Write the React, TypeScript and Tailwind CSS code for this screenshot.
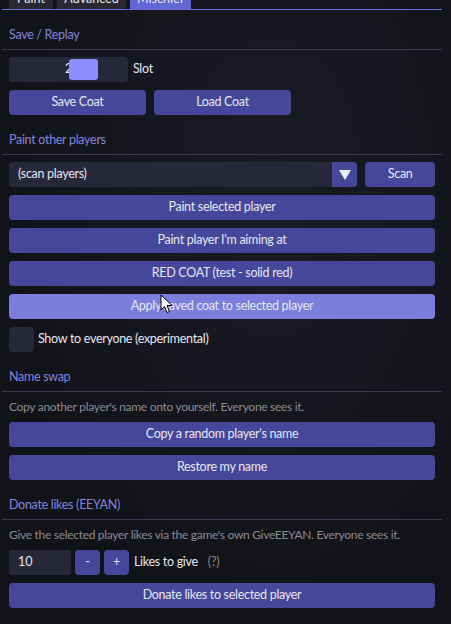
import { FC, ReactNode } from "react"

const font = { fontFamily: 'Lato, "Noto Sans", sans-serif' }

const Btn: FC<{ children: ReactNode, className?: string, hover?: boolean }> = ({ children, className, hover }) => (
  <div className={(hover ? 'bg-[#7a7edd] ' : 'bg-[#45489a] ') + 'h-[25px] rounded-[4px] flex items-center justify-center text-[12.5px] tracking-[-0.3px] text-[#e6e6f0] ' + (className ?? '')}>
    {children}
  </div>
)

const Header: FC<{ title: string, first?: boolean }> = ({ title, first }) => (
  <div className={(first ? 'mt-[17px]' : 'mt-[9px]') + ' -mb-[1px]'}>
    <div className="h-[16px] leading-[16px] text-[12.5px] tracking-[-0.3px] text-[#8385dc]">{title}</div>
    <div className="mt-[6px] -mx-[7px] h-px bg-[#393950]" />
  </div>
)

const Hint: FC<{ children: ReactNode }> = ({ children }) => (
  <div className="h-[15px] leading-[15px] text-[12px] tracking-[-0.3px] text-[#8a8a92] whitespace-nowrap">{children}</div>
)

const Label: FC<{ children: ReactNode, className?: string }> = ({ children, className }) => (
  <span className={'text-[12.5px] tracking-[-0.3px] ' + (className ?? '')}>{children}</span>
)

const Tab: FC<{ label: string, active?: boolean, w: string }> = ({ label, active, w }) => (
  <div className={(active ? 'bg-[#6367d6] ' : 'bg-[#292934] ') + w + ' h-[19px] shrink-0 rounded-t-[4px] flex items-center justify-center text-[12.5px] text-[#e6e6f0]'}>
    {label}
  </div>
)

export default function App() {
  return (
    <div style={font} className="relative w-[451px] h-[624px] overflow-hidden bg-[radial-gradient(ellipse_at_60%_30%,#1b1b24_0%,#121219_70%)] text-[#e6e6f0]">
      <div className="px-[2px] w-[444px]">
        <div className="h-[9px] overflow-hidden flex items-end gap-[4px] px-[7px]">
          <Tab label="Paint" w="w-[44px]" />
          <Tab label="Advanced" w="w-[69px]" />
          <Tab label="Mischief" w="w-[61px]" active />
        </div>
        <div className="h-px bg-[#6a6ed8]" />

        <div className="px-[7px] flex flex-col gap-[8px]">
          <Header title="Save / Replay" first />
          <div className="flex items-center gap-[4px]">
            <div className="relative w-[119px] h-[25px] rounded-[4px] bg-[#27273a] flex items-center justify-center text-[12.5px]">
              <span className="relative z-0">2</span>
              <div className="absolute left-[60px] top-[2px] w-[29px] h-[21px] rounded-[3px] bg-[#8b8fff]" />
            </div>
            <Label className="ml-[1px]">Slot</Label>
          </div>
          <div className="flex gap-[8px]">
            <Btn className="w-[137px]">Save Coat</Btn>
            <Btn className="w-[137px]">Load Coat</Btn>
          </div>

          <Header title="Paint other players" />
          <div className="flex gap-[8px]">
            <div className="w-[350px] h-[25px] rounded-[4px] bg-[#27273a] flex items-center overflow-hidden">
              <Label className="flex-1 pl-[9px]">(scan players)</Label>
              <div className="w-[25px] h-full bg-[#45489a] flex items-center justify-center">
                <svg width="12" height="10" viewBox="0 0 12 10"><path d="M0 0H12L6 10Z" fill="#ececf4" /></svg>
              </div>
            </div>
            <Btn className="w-[70px]">Scan</Btn>
          </div>
          <Btn>Paint selected player</Btn>
          <Btn>Paint player I'm aiming at</Btn>
          <Btn>RED COAT (test - solid red)</Btn>
          <Btn hover>Apply saved coat to selected player</Btn>
          <div className="flex items-center gap-[4px]">
            <div className="w-[25px] h-[25px] rounded-[4px] bg-[#27273a]" />
            <Label>Show to everyone (experimental)</Label>
          </div>

          <Header title="Name swap" />
          <Hint>Copy another player's name onto yourself. Everyone sees it.</Hint>
          <Btn>Copy a random player's name</Btn>
          <Btn>Restore my name</Btn>

          <Header title="Donate likes (EEYAN)" />
          <Hint>Give the selected player likes via the game's own GiveEEYAN. Everyone sees it.</Hint>
          <div className="flex items-center gap-[4px]">
            <div className="w-[62px] h-[25px] rounded-[4px] bg-[#27273a] flex items-center pl-[9px] text-[12.5px]">10</div>
            <Btn className="w-[25px]">-</Btn>
            <Btn className="w-[25px]">+</Btn>
            <Label className="ml-[1px]">Likes to give</Label>
            <Label className="ml-[6px] text-[#8a8a92]">(?)</Label>
          </div>
          <Btn>Donate likes to selected player</Btn>
        </div>
      </div>

      <svg className="absolute left-[160px] top-[294px]" width="13" height="20" viewBox="0 0 13 20">
        <path d="M1 1V16L4.5 12.5L7 18.5L9.5 17.5L7 11.5H12Z" fill="#fff" stroke="#000" strokeWidth="1" strokeLinejoin="round" />
      </svg>
    </div>
  )
}
